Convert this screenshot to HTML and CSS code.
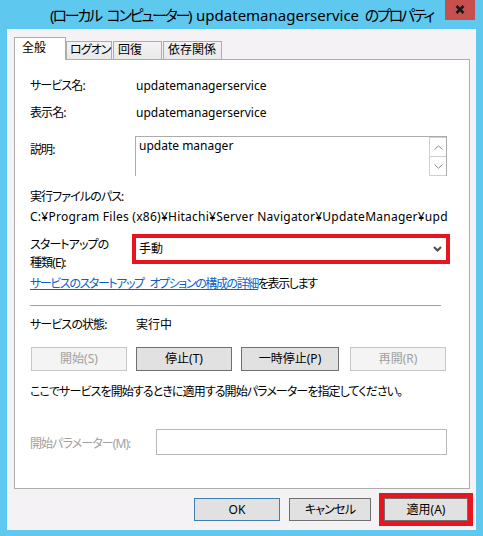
FILE: index.html
```html
<!DOCTYPE html>
<html lang="ja">
<head>
<meta charset="utf-8">
<title>updatemanagerservice のプロパティ</title>
<link rel="stylesheet" href="styles.css">
</head>
<body>
<div class="window">
  <div class="titlebar">
    <div class="spacer"></div>
    <div class="title">(ローカル コンピューター) <span class="lat">updatemanagerservice</span> のプロパティ</div>
    <div class="close-wrap">
      <div class="close">
        <svg width="10" height="9" viewBox="0 0 10 9"><path d="M1.5 1 L8.5 8 M8.5 1 L1.5 8" stroke="#1b1b1b" stroke-width="2.6" fill="none"/></svg>
      </div>
    </div>
  </div>
  <div class="client">
    <div class="tabs">
      <div class="tab active">全般</div>
      <div class="tab t-logon">ログオン</div>
      <div class="tab t-recover">回復</div>
      <div class="tab t-dep">依存関係</div>
    </div>
    <div class="panel">
      <div class="row r-name"><div class="label">サービス名:</div><div class="value">updatemanagerservice</div></div>
      <div class="row r-disp"><div class="label">表示名:</div><div class="value">updatemanagerservice</div></div>
      <div class="row r-desc">
        <div class="label label-desc">説明:</div>
        <div class="textarea">
          <div class="ta-text">update manager</div>
          <div class="ta-scroll">
            <div class="sbtn"><svg width="9" height="5" viewBox="0 0 9 5"><path d="M0.5 4.5 L4.5 0.8 L8.5 4.5" stroke="#8a8a8a" fill="none"/></svg></div>
            <div class="sbtn"><svg width="9" height="5" viewBox="0 0 9 5"><path d="M0.5 0.5 L4.5 4.2 L8.5 0.5" stroke="#8a8a8a" fill="none"/></svg></div>
          </div>
        </div>
      </div>
      <div class="line r-exe">実行ファイルのパス:</div>
      <div class="line r-path">C:¥Program Files (x86)¥Hitachi¥Server Navigator¥UpdateManager¥upd</div>
      <div class="row r-start">
        <div class="label label-start">スタートアップの<br>種類(E):</div>
        <div class="select">
          <span>手動</span>
          <svg width="9" height="6" viewBox="0 0 9 6"><path d="M1 1 L4.5 4.5 L8 1" stroke="#4a4a4a" stroke-width="2" fill="none"/></svg>
        </div>
      </div>
      <div class="line r-link"><a class="link" href="#">サービスのスタートアップ オプションの構成の詳細</a>を表示します</div>
      <div class="sep"></div>
      <div class="row r-state"><div class="label">サービスの状態:</div><div class="value">実行中</div></div>
      <div class="btnrow">
        <div class="btn disabled b-start">開始(S)</div>
        <div class="btn b-stop">停止(T)</div>
        <div class="btn b-pause">一時停止(P)</div>
        <div class="btn disabled b-resume">再開(R)</div>
      </div>
      <div class="line r-help">ここでサービスを開始するときに適用する開始パラメーターを指定してください。</div>
      <div class="row r-param">
        <div class="label label-param">開始パラメーター(M):</div>
        <div class="input"></div>
      </div>
    </div>
    <div class="actions">
      <div class="btn b-ok">OK</div>
      <div class="btn b-cancel">キャンセル</div>
      <div class="btn b-apply">適用(A)</div>
    </div>
  </div>
</div>
</body>
</html>
```
FILE: styles.css
```css
* { box-sizing: border-box; }
html, body { margin: 0; padding: 0; }
body {
  width: 483px;
  height: 536px;
  overflow: hidden;
  background: #5fc8ef;
  font-family: "Noto Sans", "Noto Sans CJK JP", sans-serif;
  font-size: 12px;
  font-feature-settings: "palt";
  color: #000;
}
.window {
  width: 483px;
  height: 536px;
  display: flex;
  flex-direction: column;
}
.titlebar {
  height: 29px;
  display: grid;
  grid-template-columns: 1fr auto 1fr;
  align-items: start;
}
.title {
  font-size: 15px;
  line-height: 20px;
  margin-top: 5px;
  white-space: nowrap;
  color: #000;
  letter-spacing: -2.2px;
  word-spacing: 4px;
}
.title .lat { letter-spacing: 0; }
.close-wrap { display: flex; justify-content: flex-end; padding-right: 8px; }
.close {
  width: 30px;
  height: 20px;
  background: #c7504f;
  display: flex;
  align-items: center;
  justify-content: center;
  padding-bottom: 2px;
}
.client {
  margin: 0 7px;
  height: 501px;
  background: #f5f2f6;
  padding: 8px 6px 0 7px;
  display: flex;
  flex-direction: column;
}
.tabs {
  display: flex;
  align-items: flex-end;
  height: 22px;
  position: relative;
  z-index: 1;
}
.tab {
  height: 18px;
  border: 1px solid #acacac;
  border-bottom: none;
  background: linear-gradient(#f3f3f3, #e9e9e9);
  line-height: 16px;
  padding-left: 4px;
  white-space: nowrap;
}
.tab.active {
  height: 23px;
  width: 52px;
  background: #fff;
  margin-bottom: -1px;
  padding-left: 7px;
  line-height: 19px;
}
.t-logon { width: 46px; padding-left: 3px; letter-spacing: -1px; }
.t-recover { width: 49px; margin-left: 1px; }
.t-dep { width: 59px; margin-left: 1px; }
.panel {
  width: 456px;
  height: 430px;
  background: #fff;
  border: 1px solid #acacac;
  padding: 18px 0 0 15px;
  display: flex;
  flex-direction: column;
}
.row { display: flex; align-items: flex-start; line-height: 16px; }
.label { width: 106px; flex: none; white-space: nowrap; letter-spacing: -0.9px; }
.value { white-space: nowrap; }
.line { line-height: 16px; white-space: nowrap; }
.r-disp { margin-top: 11px; }
.r-desc { margin-top: 15px; }
.label-desc { padding-top: 6px; }
.textarea {
  margin-left: -1px;
  width: 312px;
  height: 40px;
  border: 1px solid #ababab;
  border-bottom: none;
  display: flex;
  justify-content: space-between;
}
.ta-text { padding: 1px 0 0 3px; line-height: 16px; }
.ta-scroll { width: 17px; display: flex; flex-direction: column; }
.sbtn {
  height: 20px;
  border: 1px solid #cfcfcf;
  border-right: none;
  display: flex;
  align-items: center;
  justify-content: center;
  background: #fff;
}
.sbtn + .sbtn { border-top: none; height: 19px; }
.r-exe { margin-top: 13px; letter-spacing: -0.9px; }
.r-path { margin-top: 4px; letter-spacing: 0.25px; }
.r-start { margin-top: 9px; }
.label-start { padding-top: 2px; line-height: 18px; }
.select {
  margin-top: 4px;
  width: 310px;
  height: 22px;
  background: #fff;
  outline: 4px solid #e8141f;
  display: flex;
  align-items: center;
  justify-content: space-between;
  padding: 0 4px 0 3px;
  line-height: 16px;
}
.r-link { margin-top: 4px; letter-spacing: -1.4px; word-spacing: 4px; }
.link { color: #0b63c8; text-decoration: underline; }
.sep {
  margin-top: 13px;
  width: 411px;
  height: 1px;
  background: #a0a0a0;
}
.r-state { margin-top: 11px; }
.btnrow {
  margin-top: 14px;
  display: flex;
  gap: 9px;
  padding-left: 1px;
}
.btn {
  height: 24px;
  border: 1px solid #707070;
  background: #e1e1e1;
  display: flex;
  align-items: center;
  justify-content: center;
  white-space: nowrap;
  line-height: 16px;
}
.btn.disabled {
  border-color: #c6c6c6;
  background: #f4f4f4;
  color: #a0a0a0;
}
.b-start, .b-stop { width: 96px; }
.b-pause { width: 98px; }
.b-resume { width: 96px; margin-left: 2px; }
.r-help { margin-top: 13px; letter-spacing: -0.9px; }
.r-param { margin-top: 29px; align-items: center; }
.label-param { width: 126px; color: #a0a0a0; padding-top: 3px; }
.input {
  width: 291px;
  height: 26px;
  border: 1px solid #b9b9b9;
  background: #fff;
}
.actions {
  margin-top: 9px;
  display: flex;
  justify-content: flex-end;
  padding-right: 2px;
}
.actions .btn { height: 23px; }
.b-ok { width: 86px; border-color: #3c7fb1; }
.b-cancel { width: 82px; margin-left: 9px; letter-spacing: -0.8px; }
.b-apply { width: 84px; margin-left: 13px; outline: 5px solid #e8141f; }
```
